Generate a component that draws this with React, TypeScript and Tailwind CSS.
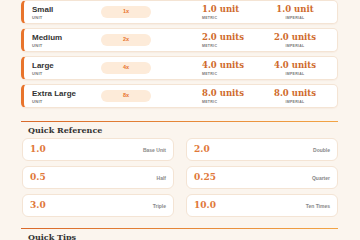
const sizes = [
  { name: "Small", mult: "1x", metric: "1.0 unit", imperial: "1.0 unit" },
  { name: "Medium", mult: "2x", metric: "2.0 units", imperial: "2.0 units" },
  { name: "Large", mult: "4x", metric: "4.0 units", imperial: "4.0 units" },
  { name: "Extra Large", mult: "8x", metric: "8.0 units", imperial: "8.0 units" },
];

const refs = [
  { value: "1.0", label: "Base Unit" },
  { value: "2.0", label: "Double" },
  { value: "0.5", label: "Half" },
  { value: "0.25", label: "Quarter" },
  { value: "3.0", label: "Triple" },
  { value: "10.0", label: "Ten Times" },
];

const sans = "font-['Liberation_Sans',Arial,sans-serif]";
const serif = "font-['DejaVu_Serif',Georgia,serif]";

function SectionTitle({ children, className }: { children: React.ReactNode; className: string }) {
  return (
    <div className={className}>
      <div className="h-px bg-[linear-gradient(90deg,#d9692b,#f2a445)]" />
      <h2 className={`${serif} px-[7px] pt-[2px] text-[8px] leading-[12px] font-bold text-[#333]`}>
        {children}
      </h2>
    </div>
  );
}

export default function App() {
  return (
    <div className="h-screen overflow-hidden bg-[#fbf5ee] bg-[radial-gradient(#f3e4d4_0.6px,transparent_0.7px)] bg-[length:4px_4px] pl-[21px] pr-[22px]">
      <div className="flex flex-col gap-1">
        {sizes.map((s) => (
          <div
            key={s.name}
            className="flex h-6 items-center rounded-[5px] border border-l-[3px] border-[#f4e4d4] border-l-[#e8742c] bg-white shadow-[0_1px_1px_rgba(200,150,100,0.08)]"
          >
            <div className="w-[77px] pl-[8px]">
              <div className={`${sans} text-[8px] leading-[9px] font-bold text-[#333]`}>{s.name}</div>
              <div className={`${sans} mt-[1px] text-[4px] leading-[5px] font-bold tracking-[0.3px] text-[#777]`}>UNIT</div>
            </div>
            <div className="-mt-[1px] flex h-3 w-[50px] items-center justify-center rounded-full bg-[#fdebd9]">
              <span className={`${sans} text-[5.5px] font-bold text-[#e8742c]`}>{s.mult}</span>
            </div>
            <div className="w-[51px]" />
            <div className="w-[62px]">
              <div className={`${serif} text-[8.5px] leading-[11px] font-bold text-[#cf6a2c]`}>{s.metric}</div>
              <div className={`${sans} mt-[1px] text-[3.5px] leading-[5px] font-bold tracking-[0.3px] text-[#777]`}>METRIC</div>
            </div>
            <div className="w-[62px] text-center">
              <div className={`${serif} text-[8.5px] leading-[11px] font-bold text-[#cf6a2c]`}>{s.imperial}</div>
              <div className={`${sans} mt-[1px] text-[3.5px] leading-[5px] font-bold tracking-[0.3px] text-[#777]`}>IMPERIAL</div>
            </div>
          </div>
        ))}
      </div>

      <SectionTitle className="mt-[13px]">Quick Reference</SectionTitle>
      <div className="mt-[2px] grid grid-cols-2 gap-x-3 gap-y-[5px] pl-px">
        {refs.map((r) => (
          <div
            key={r.label}
            className="flex h-[23px] items-center justify-between rounded-[6px] border border-[#f4e4d4] bg-white px-[7px]"
          >
            <span className={`${serif} text-[9px] font-bold text-[#e0783a]`}>{r.value}</span>
            <span className={`${sans} mt-[3px] text-[5px] font-bold text-[#888]`}>{r.label}</span>
          </div>
        ))}
      </div>

      <SectionTitle className="mt-[11px]">Quick Tips</SectionTitle>
    </div>
  );
}
